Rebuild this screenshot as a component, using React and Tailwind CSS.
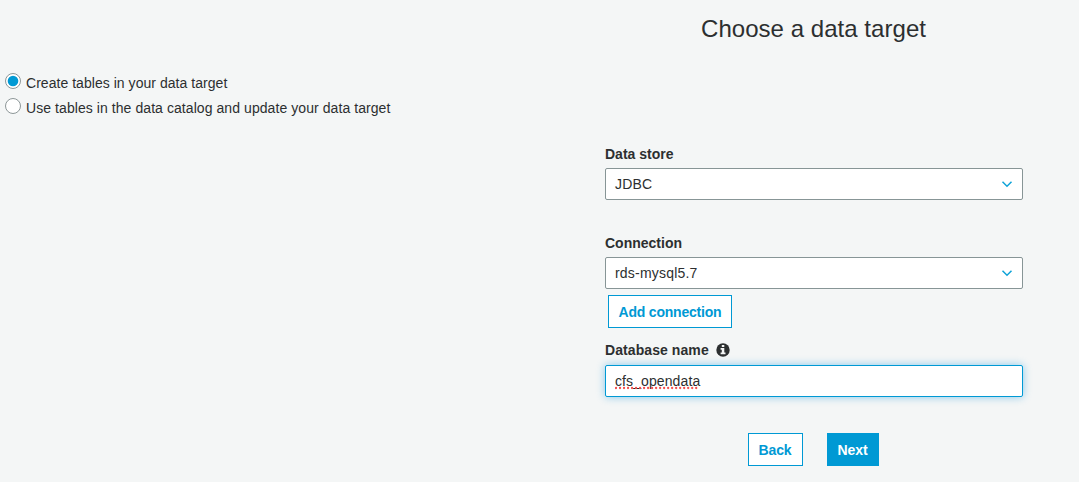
function Radio({ checked, label, tracking }) {
  return (
    <label className="flex h-[25px] items-start">
      <svg width="18" height="18" viewBox="0 0 18 18" className="block shrink-0">
        <circle cx="9" cy="9" r="7.5" fill="#fff" stroke="#8d9798" />
        {checked && <circle cx="9" cy="9" r="5.3" fill="#0099d4" />}
      </svg>
      <span className={`ml-1 mt-[3px] leading-4 whitespace-nowrap ${tracking}`}>{label}</span>
    </label>
  );
}

function Select({ label, value, tracking }) {
  return (
    <div>
      <div className="h-[22px] font-bold leading-4">{label}</div>
      <div className="flex h-8 items-center justify-between rounded-[2px] border border-[#879596] bg-white pl-[9px] pr-[9px]">
        <span className={`leading-4 ${tracking}`}>{value}</span>
        <svg width="12" height="8" viewBox="0 0 12 8" fill="none" className="block">
          <path d="M1.5 1.700L6 6.200l4.500-4.500" stroke="#0fa3d8" strokeWidth="1.5" />
        </svg>
      </div>
    </div>
  );
}

export default function App() {
  return (
    <main className="flex h-[482px] w-[1079px] overflow-hidden bg-[#f4f6f6] font-['Liberation_Sans',Arial,sans-serif] text-sm text-[#2c2f30]">
      <section className="w-[605px] shrink-0 pl-1 pt-[72px]">
        <Radio checked label="Create tables in your data target" tracking="tracking-[0.04px]" />
        <Radio label="Use tables in the data catalog and update your data target" tracking="tracking-[0.07px]" />
      </section>
      <section className="w-[418px]">
        <h1 className="-ml-px h-[146px] pt-[15px] text-center text-2xl leading-[28px] tracking-[0.04px]">Choose a data target</h1>
        <Select label="Data store" value="JDBC" tracking="tracking-[0.2px]" />
        <div className="h-[35px]" />
        <Select label="Connection" value="rds-mysql5.7" tracking="tracking-[0.2px]" />
        <button className="ml-[3px] mt-1.5 block h-[33px] w-[124px] border border-[#0099d4] bg-white font-bold leading-4 tracking-[-0.2px] text-[#0099d4]">
          Add connection
        </button>
        <div className="mt-[14px] flex h-[23px] items-start font-bold leading-4">
          <span className="tracking-[0.08px]">Database name</span>
          <svg width="14" height="14" viewBox="0 0 14 14" className="ml-[7px] mt-px block">
            <circle cx="7" cy="7" r="6.700" fill="#2c2f30" />
            <path d="M5.800 1.900h2.500v2.200H5.800zM4.600 5h3.700v4.600h1.200v1.700H4.600V9.600h1.200V6.700H4.600z" fill="#f4f6f6" />
          </svg>
        </div>
        <div className="flex h-8 items-center rounded-[2px] border border-[#0099d4] bg-white pl-[9px] shadow-[0_0_8px_rgba(0,145,220,0.450)]">
          <span className="relative leading-4 tracking-[0.1px]">
            cfs_opendata
            <svg width="85" height="4" className="absolute bottom-[-1px] left-0">
              <path d="M1 2H84" stroke="#f4504f" strokeWidth="2.3" strokeLinecap="round" strokeDasharray="0.010 4" />
            </svg>
          </span>
        </div>
        <div className="-ml-[2px] mt-9 flex justify-center gap-6">
          <button className="h-[33px] w-[55px] border border-[#0099d4] bg-white font-bold leading-4 tracking-[-0.1px] text-[#0099d4]">Back</button>
          <button className="h-[33px] w-[52px] bg-[#0099d4] font-bold leading-4 tracking-[-0.1px] text-white">Next</button>
        </div>
      </section>
    </main>
  );
}
